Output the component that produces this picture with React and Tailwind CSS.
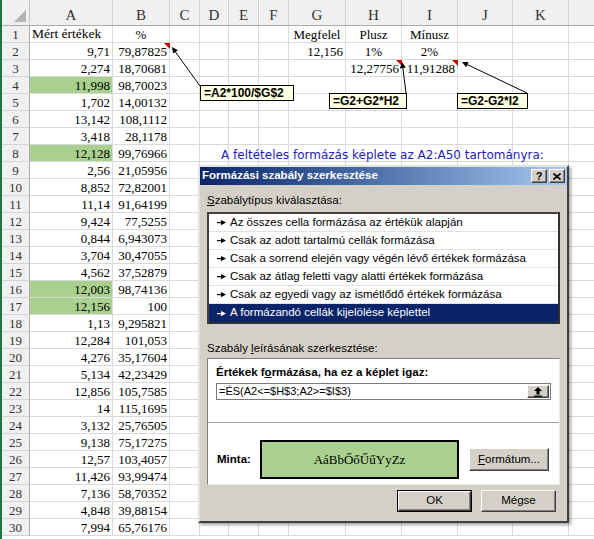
import React from 'react';

const COLS = [
  { k: 'A', w: 'w-[83px]' },
  { k: 'B', w: 'w-[57px]' },
  { k: 'C', w: 'w-[30px]' },
  { k: 'D', w: 'w-[29px]' },
  { k: 'E', w: 'w-[30px]' },
  { k: 'F', w: 'w-[30px]' },
  { k: 'G', w: 'w-[57px]' },
  { k: 'H', w: 'w-[56px]' },
  { k: 'I', w: 'w-[56px]' },
  { k: 'J', w: 'w-[55px]' },
  { k: 'K', w: 'w-[56px]' },
];

const A = ['9,71', '2,274', '11,998', '1,702', '13,142', '3,418', '12,128', '2,56', '8,852', '11,14', '9,424', '0,844', '3,704', '4,562', '12,003', '12,156', '1,13', '12,284', '4,276', '5,134', '12,856', '14', '3,132', '9,138', '12,57', '11,426', '7,136', '4,848', '7,994'];
const B = ['79,87825', '18,70681', '98,70023', '14,00132', '108,1112', '28,1178', '99,76966', '21,05956', '72,82001', '91,64199', '77,5255', '6,943073', '30,47055', '37,52879', '98,74136', '100', '9,295821', '101,053', '35,17604', '42,23429', '105,7585', '115,1695', '25,76505', '75,17275', '103,4057', '93,99474', '58,70352', '39,88154', '65,76176'];
const GREEN = [4, 8, 16, 17];

const EXTRA = {
  A1: { t: 'Mért értékek', a: 'justify-start text-[13.5px]' },
  B1: { t: '%', a: 'justify-center' },
  G1: { t: 'Megfelel', a: 'justify-center' },
  H1: { t: 'Plusz', a: 'justify-center' },
  I1: { t: 'Mínusz', a: 'justify-center' },
  G2: { t: '12,156', a: 'justify-end' },
  H2: { t: '1%', a: 'justify-center' },
  I2: { t: '2%', a: 'justify-center' },
  H3: { t: '12,27756', a: 'justify-end' },
  I3: { t: '11,91288', a: 'justify-end' },
};

function cellContent(col, row) {
  const key = col + row;
  if (EXTRA[key]) return EXTRA[key];
  if (row >= 2 && col === 'A') return { t: A[row - 2], a: 'justify-end' };
  if (row >= 2 && col === 'B') return { t: B[row - 2], a: 'justify-end' };
  return null;
}

function Sheet() {
  const rows = Array.from({ length: 30 }, (_, i) => i + 1);
  return (
    <div className="flex-1 flex flex-col font-['Liberation_Serif',serif] text-[13px] text-black">
      <div className="h-[26px] flex bg-[#f0f0f0] border-b border-[#ababab]">
        <div className="w-[28px] shrink-0 border-r border-[#c6c6c6] relative">
          <svg className="absolute right-[3px] bottom-[3px]" width="12" height="12">
            <polygon points="12,0 12,12 0,12" fill="#b4b4b4" />
          </svg>
        </div>
        {COLS.map((c) => (
          <div key={c.k} className={`${c.w} shrink-0 border-r border-[#d0d0d0] flex items-center justify-center pt-[6px] text-[15px] text-[#333]`}>
            {c.k}
          </div>
        ))}
        <div className="flex-1" />
      </div>
      {rows.map((r) => (
        <div key={r} className="h-[17px] flex">
          <div className="w-[28px] shrink-0 bg-[#f0f0f0] border-r border-[#ababab] border-b border-b-[#d4d4d4] flex items-center justify-center text-[#333] leading-none">
            {r}
          </div>
          {COLS.map((c) => {
            const v = cellContent(c.k, r);
            const green = c.k === 'A' && GREEN.includes(r);
            return (
              <div
                key={c.k}
                className={`${c.w} shrink-0 border-r border-b border-[#dadada] flex items-center px-[2px] leading-none whitespace-nowrap ${v ? v.a : ''} ${green ? 'bg-[#a9d08e]' : ''}`}
              >
                {v ? v.t : ''}
              </div>
            );
          })}
          <div className="flex-1 border-b border-[#dadada]" />
        </div>
      ))}
    </div>
  );
}

function Overlay() {
  return (
    <svg className="absolute inset-0 pointer-events-none" width="594" height="539">
      <polygon points="164,43 170,43 170,49" fill="#d00000" />
      <polygon points="396,60 402,60 402,66" fill="#d00000" />
      <polygon points="452,60 458,60 458,66" fill="#d00000" />
      <line x1="200" y1="86" x2="174" y2="50" stroke="#000" strokeWidth="1" />
      <polygon points="172,47 177.9,50.2 173.1,53.6" fill="#000" />
      <line x1="406" y1="93" x2="402.6" y2="66" stroke="#000" strokeWidth="1" />
      <polygon points="402,62 405.8,67.6 399.8,68.4" fill="#000" />
      <line x1="527" y1="93" x2="466" y2="64" stroke="#000" strokeWidth="1" />
      <polygon points="462,62 468.7,61.9 466.1,67.3" fill="#000" />
    </svg>
  );
}

function Callout({ className, children }) {
  return (
    <div className={`absolute h-[16px] bg-[#ffffe1] border border-black flex items-center px-[3px] font-['Liberation_Sans',sans-serif] font-bold text-[12px] leading-none text-black whitespace-nowrap ${className}`}>
      {children}
    </div>
  );
}

const btn3d =
  'bg-[#d4d0c8] border border-t-white border-l-white border-r-[#404040] border-b-[#404040] shadow-[inset_-1px_-1px_0_#808080]';

function ListArrow({ light }) {
  return (
    <svg width="9" height="7" className="shrink-0">
      <rect x="0" y="3" width="5" height="1.2" fill={light ? '#fff' : '#000'} />
      <polygon points="4,1 9,3.6 4,6.2" fill={light ? '#fff' : '#000'} />
    </svg>
  );
}

const RULES = [
  'Az összes cella formázása az értékük alapján',
  'Csak az adott tartalmú cellák formázása',
  'Csak a sorrend elején vagy végén lévő értékek formázása',
  'Csak az átlag feletti vagy alatti értékek formázása',
  'Csak az egyedi vagy az ismétlődő értékek formázása',
  'A formázandó cellák kijelölése képlettel',
];

function Dialog() {
  return (
    <div className="absolute left-[198px] top-[165px] w-[371px] h-[358px] bg-[#d4d0c8] border-2 border-t-[#e4e2de] border-l-[#e4e2de] border-r-[#404040] border-b-[#404040] shadow-[2px_2px_3px_rgba(0,0,0,0.35)] font-['Liberation_Sans',sans-serif] text-[11.5px] text-black">
      <div className="h-[18px] bg-linear-to-r from-[#0a246a] to-[#a6caf0] flex items-center px-[2px]">
        <span className="font-bold text-white text-[11.5px] leading-none">Formázási szabály szerkesztése</span>
        <div className="ml-auto flex gap-[2px]">
          <div className={`w-[16px] h-[14px] ${btn3d} flex items-center justify-center font-bold text-[11px] leading-none`}>?</div>
          <div className={`w-[16px] h-[14px] ${btn3d} flex items-center justify-center`}>
            <svg width="8" height="7">
              <path d="M0.5 0.5L7.5 6.5M7.5 0.5L0.5 6.5" stroke="#000" strokeWidth="1.6" />
            </svg>
          </div>
        </div>
      </div>

      <div className="px-[7px]">
        <div className="mt-[8px] h-[14px] leading-[14px]">
          <span className="underline">S</span>zabálytípus kiválasztása:
        </div>
        <div className="mt-[5px] bg-white border-2 border-t-[#404040] border-l-[#404040] border-r-[#303030] border-b-[#303030]">
          {RULES.map((r, i) => {
            const sel = i === RULES.length - 1;
            return (
              <div
                key={r}
                className={`h-[18px] flex items-center gap-[4px] pl-[8px] whitespace-nowrap ${sel ? 'bg-[#0a246a] text-white' : 'border-b border-[#e2e2e2]'}`}
              >
                <ListArrow light={sel} />
                <span>{r}</span>
              </div>
            );
          })}
        </div>

        <div className="mt-[17px] h-[14px] leading-[14px]">
          Szabály <span className="underline">l</span>eírásának szerkesztése:
        </div>
        <div className="mt-[3px] h-[127px] bg-white border border-t-[#808080] border-l-[#808080] border-r-[#e8e8e8] border-b-[#e8e8e8] px-[8px] pt-[6px]">
          <div className="h-[14px] leading-[14px] font-bold">
            Értékek f<span className="underline">o</span>rmázása, ha ez a képlet igaz:
          </div>
          <div className="mt-[4px] h-[17px] border border-[#7a7a7a] flex items-center pl-[2px]">
            <span className="text-[11px]">=ÉS(A2&lt;=$H$3;A2&gt;=$I$3)</span>
            <div className={`ml-auto mr-[1px] w-[22px] h-[13px] ${btn3d} flex items-center justify-center`}>
              <svg width="10" height="10">
                <polygon points="5,0 9,4 6.5,4 6.5,7.5 3.5,7.5 3.5,4 1,4" fill="#000" />
                <rect x="1" y="8.5" width="8" height="1.3" fill="#000" />
              </svg>
            </div>
          </div>
          <div className="-mx-[8px] mt-[22px] h-[1px] bg-[#a0a0a0]" />
          <div className="mt-[17px] h-[39px] flex items-center pl-[1px]">
            <div className="w-[43px] font-bold">Minta:</div>
            <div className="w-[199px] h-[39px] border-2 border-black bg-[#a9d08e] flex items-center justify-center font-['Liberation_Serif',serif] text-[13px]">
              AáBbŐőŰűYyZz
            </div>
            <div className={`ml-[10px] w-[80px] h-[23px] ${btn3d} flex items-center justify-center`}>
              <span className="underline">F</span>ormátum...
            </div>
          </div>
        </div>
        <div className="mt-[5px] flex justify-end gap-[9px] pr-[4px]">
          <div className="w-[75px] h-[22px] border border-black">
            <div className={`w-full h-full ${btn3d} flex items-center justify-center`}>OK</div>
          </div>
          <div className={`w-[75px] h-[22px] ${btn3d} flex items-center justify-center`}>Mégse</div>
        </div>
      </div>
    </div>
  );
}

export default function App() {
  return (
    <div className="relative w-[594px] h-[539px] overflow-hidden bg-white flex">
      <div className="w-[2px] shrink-0 bg-[#217346]" />
      <Sheet />
      <Overlay />
      <Callout className="left-[200px] top-[85px] w-[94px]">=A2*100/$G$2</Callout>
      <Callout className="left-[329px] top-[93px] w-[78px]">=G2+G2*H2</Callout>
      <Callout className="left-[457px] top-[93px] w-[71px]">=G2-G2*I2</Callout>
      <div className="absolute left-[221px] top-[146px] h-[17px] flex items-center font-['DejaVu_Sans',sans-serif] text-[12px] text-[#2222b4] whitespace-nowrap">
        A feltételes formázás képlete az A2:A50 tartományra:
      </div>
      <Dialog />
    </div>
  );
}
